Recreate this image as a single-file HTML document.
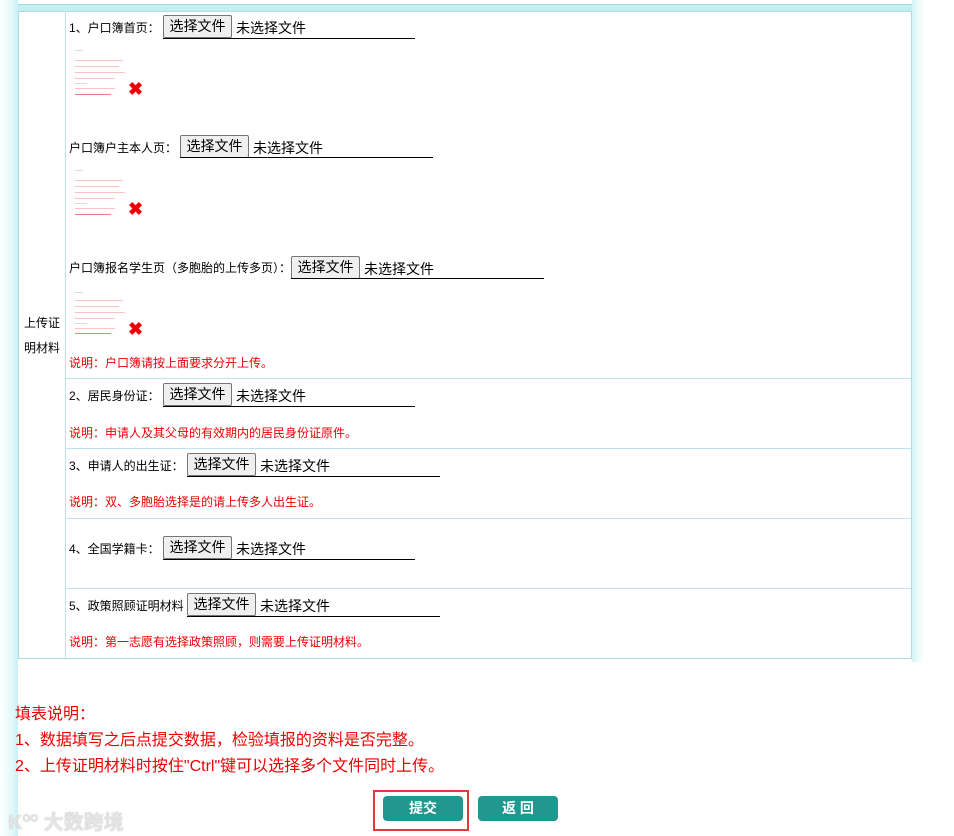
<!DOCTYPE html>
<html><head><meta charset="utf-8"><style>
body{margin:0;width:954px;height:836px;background:#fff;position:relative;overflow:hidden;font-family:"Liberation Sans","Noto Sans CJK SC",sans-serif;font-size:13px;color:#000}
.a{position:absolute;white-space:nowrap}
.l{position:absolute;white-space:nowrap;font-size:12px}
.f{position:absolute;white-space:nowrap;font-size:14px}
.btn{position:absolute;height:23px;border:1px solid #767676;border-radius:2px;background:#efefef;font-size:14px;line-height:21px;padding:0;box-sizing:border-box;width:69px;text-align:center}
.ul{position:absolute;height:1px;background:#000}
.note{position:absolute;color:#e00;font-size:12px;white-space:nowrap}
.h{position:absolute;left:66px;width:845px;height:1px;background:#bfe3ea}
.thumb{position:absolute;width:62px;height:48px}
.thumb i{position:absolute;left:0;height:1px;background:#f8c4c4}
.x{position:absolute;color:#e00;font-size:18px;font-weight:bold;line-height:18px}
.red{position:absolute;left:15px;color:#e00;font-size:16px;white-space:nowrap}
.gb{position:absolute;top:796px;width:80px;height:25px;background:#21988f;border-radius:4px;color:#fff;font-weight:bold;font-size:14px;text-align:center;line-height:25px}
</style></head><body>
<div style="position:absolute;left:0;top:0;width:18px;height:836px;background:linear-gradient(90deg,#fff,#e0f8fa 70%,#c8f0f4)"></div>
<div style="position:absolute;left:18px;top:4px;width:894px;height:7px;background:#c3eef2;border-top:1px solid #9fdbe4"></div>
<div style="position:absolute;left:912px;top:0;width:12px;height:662px;background:linear-gradient(90deg,#d4f4f7,#fff)"></div>
<div style="position:absolute;left:18px;top:11px;width:892px;height:646px;border:1px solid #a9dfe8"></div>
<div style="position:absolute;left:65px;top:12px;width:1px;height:646px;background:#bfe3ea"></div>
<div class="h" style="top:378px"></div><div class="h" style="top:448px"></div><div class="h" style="top:518px"></div><div class="h" style="top:588px"></div>
<div class="l" style="left:24px;top:314px">上传证</div>
<div class="l" style="left:24px;top:339px">明材料</div>

<div class="l" style="left:69px;top:19px">1、户口簿首页：</div>
<div class="btn" style="left:163px;top:15px">选择文件</div><div class="f" style="left:236px;top:18px">未选择文件</div><div class="ul" style="left:163px;top:38px;width:252px"></div>
<div class="thumb" style="left:75px;top:50px"><i style="top:0;width:8px;background:#ddd"></i><i style="top:10px;width:48px"></i><i style="top:16px;width:44px"></i><i style="top:22px;width:50px"></i><i style="top:28px;width:40px"></i><i style="top:33px;width:12px;background:#ddd"></i><i style="top:38px;width:40px"></i><i style="top:44px;width:36px;background:#f08080"></i></div>
<div class="x" style="left:128px;top:80px">✖</div>

<div class="l" style="left:69px;top:139px">户口簿户主本人页：</div>
<div class="btn" style="left:180px;top:135px">选择文件</div><div class="f" style="left:253px;top:138px">未选择文件</div><div class="ul" style="left:180px;top:157px;width:253px"></div>
<div class="thumb" style="left:75px;top:170px"><i style="top:0;width:8px;background:#ddd"></i><i style="top:10px;width:48px"></i><i style="top:16px;width:44px"></i><i style="top:22px;width:50px"></i><i style="top:28px;width:40px"></i><i style="top:33px;width:12px;background:#ddd"></i><i style="top:38px;width:40px"></i><i style="top:44px;width:36px;background:#f08080"></i></div>
<div class="x" style="left:128px;top:200px">✖</div>

<div class="l" style="left:69px;top:259px">户口簿报名学生页（多胞胎的上传多页）：</div>
<div class="btn" style="left:291px;top:256px">选择文件</div><div class="f" style="left:364px;top:259px">未选择文件</div><div class="ul" style="left:291px;top:278px;width:253px"></div>
<div class="thumb" style="left:75px;top:292px"><i style="top:0;width:8px;background:#ddd"></i><i style="top:8px;width:48px"></i><i style="top:14px;width:44px"></i><i style="top:20px;width:50px"></i><i style="top:26px;width:40px"></i><i style="top:31px;width:12px;background:#ddd"></i><i style="top:36px;width:40px"></i><i style="top:41px;width:36px;background:#f08080"></i></div>
<div class="x" style="left:128px;top:320px">✖</div>
<div class="note" style="left:69px;top:354px">说明：户口簿请按上面要求分开上传。</div>

<div class="l" style="left:69px;top:387px">2、居民身份证：</div>
<div class="btn" style="left:163px;top:383px">选择文件</div><div class="f" style="left:236px;top:386px">未选择文件</div><div class="ul" style="left:163px;top:406px;width:252px"></div>
<div class="note" style="left:69px;top:424px">说明：申请人及其父母的有效期内的居民身份证原件。</div>

<div class="l" style="left:69px;top:457px">3、申请人的出生证：</div>
<div class="btn" style="left:187px;top:453px">选择文件</div><div class="f" style="left:260px;top:456px">未选择文件</div><div class="ul" style="left:187px;top:476px;width:253px"></div>
<div class="note" style="left:69px;top:493px">说明：双、多胞胎选择是的请上传多人出生证。</div>

<div class="l" style="left:69px;top:540px">4、全国学籍卡：</div>
<div class="btn" style="left:163px;top:536px">选择文件</div><div class="f" style="left:236px;top:539px">未选择文件</div><div class="ul" style="left:163px;top:559px;width:252px"></div>

<div class="l" style="left:69px;top:597px">5、政策照顾证明材料</div>
<div class="btn" style="left:187px;top:593px">选择文件</div><div class="f" style="left:260px;top:596px">未选择文件</div><div class="ul" style="left:187px;top:616px;width:253px"></div>
<div class="note" style="left:69px;top:633px">说明：第一志愿有选择政策照顾，则需要上传证明材料。</div>

<div class="red" style="top:700px">填表说明：</div>
<div class="red" style="top:726px">1、数据填写之后点提交数据，检验填报的资料是否完整。</div>
<div class="red" style="top:752px">2、上传证明材料时按住"Ctrl"键可以选择多个文件同时上传。</div>

<div class="gb" style="left:383px">提交</div>
<div class="gb" style="left:478px">返 回</div>
<div style="position:absolute;left:373px;top:790px;width:92px;height:37px;border:2px solid #e0393e"></div>
<div class="a" style="left:8px;top:806px;color:#e4e4e4;font-size:20px;font-weight:bold;text-shadow:0 0 1px #aaa">K<sup style="font-size:10px">OO</sup> 大数跨境</div>
</body></html>
